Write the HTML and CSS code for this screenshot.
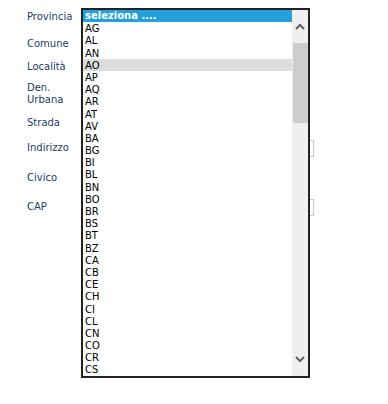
FILE: index.html
```html
<!DOCTYPE html>
<html lang="it">
<head>
    <meta charset="UTF-8">
    <meta name="viewport" content="width=device-width, initial-scale=1.0">
    <title>Indirizzo</title>
    <link rel="stylesheet" href="styles.css">
</head>
<body>
    <div class="form">
        <div class="row r-prov"><label>Provincia</label></div>
        <div class="row r-com"><label>Comune</label></div>
        <div class="row r-loc"><label>Località</label></div>
        <div class="row r-den"><label>Den.<br>Urbana</label></div>
        <div class="row r-str"><label>Strada</label></div>
        <div class="row r-ind"><label>Indirizzo</label><input type="text" class="field"></div>
        <div class="row r-civ"><label>Civico</label></div>
        <div class="row r-cap"><label>CAP</label><input type="text" class="field"></div>

        <div class="dropdown">
            <div class="options" id="options"></div>
            <div class="scrollbar">
                <div class="arrow">
                    <svg width="10" height="7" viewBox="0 0 10 7"><path d="M1 6 L5 2 L9 6" fill="none" stroke="#606060" stroke-width="2"/></svg>
                </div>
                <div class="track"><div class="thumb"></div></div>
                <div class="arrow">
                    <svg width="10" height="7" viewBox="0 0 10 7"><path d="M1 1 L5 5 L9 1" fill="none" stroke="#606060" stroke-width="2"/></svg>
                </div>
            </div>
        </div>
    </div>

    <script>
        const province = ['AG','AL','AN','AO','AP','AQ','AR','AT','AV','BA','BG','BI','BL','BN','BO','BR','BS','BT','BZ','CA','CB','CE','CH','CI','CL','CN','CO','CR','CS'];
        const options = document.getElementById('options');
        const first = document.createElement('div');
        first.className = 'option selected';
        first.textContent = 'seleziona ....';
        options.appendChild(first);
        province.forEach(p => {
            const opt = document.createElement('div');
            opt.className = 'option' + (p === 'AO' ? ' hover' : '');
            opt.textContent = p;
            options.appendChild(opt);
        });
    </script>
</body>
</html>
```

FILE: styles.css
```css
body {
    margin: 0;
    background-color: #ffffff;
    font-family: 'DejaVu Sans', Verdana, sans-serif;
    font-size: 10px;
}

.form {
    position: relative;
    width: 388px;
    height: 404px;
    padding-left: 27px;
    box-sizing: border-box;
}

.row {
    display: flex;
    align-items: center;
    height: 12px;
}

label {
    color: #1d3c6b;
    line-height: 12px;
    width: 58px;
}

.r-prov { padding-top: 11px; }
.r-com { margin-top: 15px; }
.r-loc { margin-top: 11px; }
.r-den { margin-top: 9px; height: 24px; }
.r-str { margin-top: 11px; }
.r-ind { margin-top: 13px; }
.r-civ { margin-top: 18px; }
.r-cap { margin-top: 17px; }

.field {
    width: 229px;
    height: 17px;
    box-sizing: border-box;
    border: 1px solid #c8c8c8;
    background: #fff;
    padding: 0;
    margin: 0;
}

/* elenco province aperto sopra il modulo */
.dropdown {
    position: absolute;
    left: 81px;
    top: 8px;
    width: 229px;
    height: 370px;
    box-sizing: border-box;
    border: 2px solid #222222;
    background: #ffffff;
    display: flex;
    overflow: hidden;
}

.options {
    flex: 1;
    overflow: hidden;
}

.option {
    height: 12.2px;
    line-height: 13px;
    padding-left: 2px;
    color: #000;
    white-space: nowrap;
    overflow: hidden;
}

.option.selected {
    background-color: #26a0da;
    color: #ffffff;
    font-weight: bold;
    line-height: 12px;
}

.option.hover {
    background-color: #dddddd;
}

.scrollbar {
    width: 16px;
    background: #efefef;
    display: flex;
    flex-direction: column;
}

.arrow {
    height: 33px;
    display: flex;
    align-items: center;
    justify-content: center;
}

.track {
    flex: 1;
    padding: 0 0 0 1px;
}

.thumb {
    height: 80px;
    background: #cdcdcd;
}
```
